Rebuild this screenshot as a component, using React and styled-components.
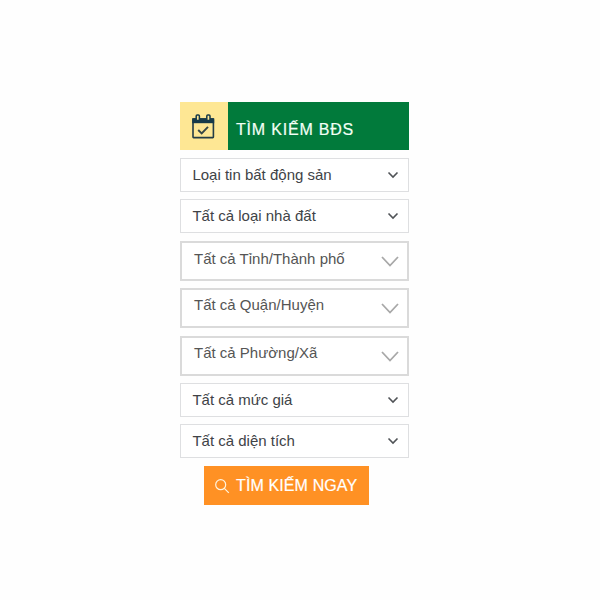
import React from "react";
import styled, { createGlobalStyle } from "styled-components";

const GlobalStyle = createGlobalStyle`
  * { box-sizing: border-box; }
  body { margin: 0; background: #fefefe; font-family: "Liberation Sans", Arial, sans-serif; }
`;

const Page = styled.main`
  width: 600px;
  height: 600px;
  display: flex;
  justify-content: center;
  padding: 102px 11px 0 0;
`;

const SearchPanel = styled.form`
  width: 229px;
  display: flex;
  flex-direction: column;
  margin: 0;
`;

const Header = styled.header`
  display: flex;
  height: 48px;
  margin-bottom: 8px;
  background: #017a3b;
`;

const HeaderIcon = styled.div`
  width: 48px;
  display: flex;
  align-items: flex-start;
  padding: 11px 0 0 11px;
  background: #fee794;
`;

const Title = styled.h1`
  margin: 0;
  padding: 7px 0 0 8px;
  font-size: 16px;
  line-height: 42px;
  font-weight: 400;
  letter-spacing: 0.8px;
  color: #f3fff5;
  -webkit-text-stroke: 0.2px #f3fff5;
  white-space: nowrap;
`;

const Field = styled.div`
  display: flex;
  justify-content: space-between;
  align-items: flex-start;
  height: ${(p) => (p.$large ? 40 : 34)}px;
  margin-bottom: ${(p) => p.$gap}px;
  padding-left: ${(p) => (p.$large ? 12 : 11.4)}px;
  padding-right: ${(p) => (p.$large ? 8 : 9)}px;
  border: ${(p) => (p.$large ? "2px solid #dadada" : "1px solid #dedfe1")};
  background: #fff;
`;

const Label = styled.span`
  font-size: 15px;
  line-height: 32px;
  margin-top: ${(p) => p.$shift}px;
  color: ${(p) => (p.$light ? "#555" : "#404347")};
  white-space: nowrap;
`;

const Arrow = styled.svg`
  flex: none;
  align-self: center;
  fill: none;
  stroke: ${(p) => (p.$large ? "#a8a8a8" : "#505357")};
  stroke-width: ${(p) => (p.$large ? 1.8 : 1.6)};
  margin-top: ${(p) => (p.$large ? 1 : 0)}px;
`;

const Submit = styled.button`
  display: flex;
  align-items: center;
  width: 165px;
  height: 39px;
  margin-left: 24px;
  padding: 0 0 0 10px;
  gap: 6px;
  border: 0;
  background: #ff9124;
  color: #fff;
  font: 400 16px "Liberation Sans", Arial, sans-serif;
  letter-spacing: 0.12px;
  -webkit-text-stroke: 0.2px #fff;
  white-space: nowrap;
`;

const fields = [
  { label: "Loại tin bất động sản", gap: 7 },
  { label: "Tất cả loại nhà đất", gap: 8 },
  { label: "Tất cả Tỉnh/Thành phố", gap: 7, large: true },
  { label: "Tất cả Quận/Huyện", gap: 8, large: true, shift: -1 },
  { label: "Tất cả Phường/Xã", gap: 7, large: true, shift: -1 },
  { label: "Tất cả mức giá", gap: 7 },
  { label: "Tất cả diện tích", gap: 8 },
];

function CalendarIcon() {
  return (
    <svg width="24" height="27" viewBox="0 0 24 27" fill="none">
      <rect x="2" y="6" width="20.4" height="18.6" rx="0.6" stroke="#243c46" strokeWidth="1.6" />
      <path d="M1.2 5.2h22v5h-22z" fill="#173a49" />
      <rect x="5.2" y="2" width="3.2" height="5.4" rx="1" fill="#fee794" stroke="#173a49" strokeWidth="1.5" />
      <rect x="15.8" y="2" width="3.2" height="5.4" rx="1" fill="#fee794" stroke="#173a49" strokeWidth="1.5" />
      <path d="m7.2 17 3.5 3.5 6.3-6.7" stroke="#374746" strokeWidth="1.9" />
    </svg>
  );
}

export default function App() {
  return (
    <>
      <GlobalStyle />
      <Page>
        <SearchPanel>
          <Header>
            <HeaderIcon><CalendarIcon /></HeaderIcon>
            <Title>TÌM KIẾM BĐS</Title>
          </Header>
          {fields.map((f) => (
            <Field key={f.label} $large={f.large} $gap={f.gap}>
              <Label $shift={f.shift || 0} $light={f.large}>{f.label}</Label>
              {f.large ? (
                <Arrow $large width="18" height="11" viewBox="0 0 18 11"><path d="m1 1 8 8.5 8-8.5" /></Arrow>
              ) : (
                <Arrow width="12" height="8" viewBox="0 0 12 8"><path d="m1.5 1.5 4.5 4.5 4.5-4.5" /></Arrow>
              )}
            </Field>
          ))}
          <Submit type="button">
            <svg width="16" height="16" viewBox="0 0 16 16" fill="none" stroke="#fff4df" strokeWidth="1.2">
              <circle cx="6.7" cy="6.7" r="5" />
              <path d="m10.3 10.3 4.5 4.5" />
            </svg>
            TÌM KIẾM NGAY
          </Submit>
        </SearchPanel>
      </Page>
    </>
  );
}
